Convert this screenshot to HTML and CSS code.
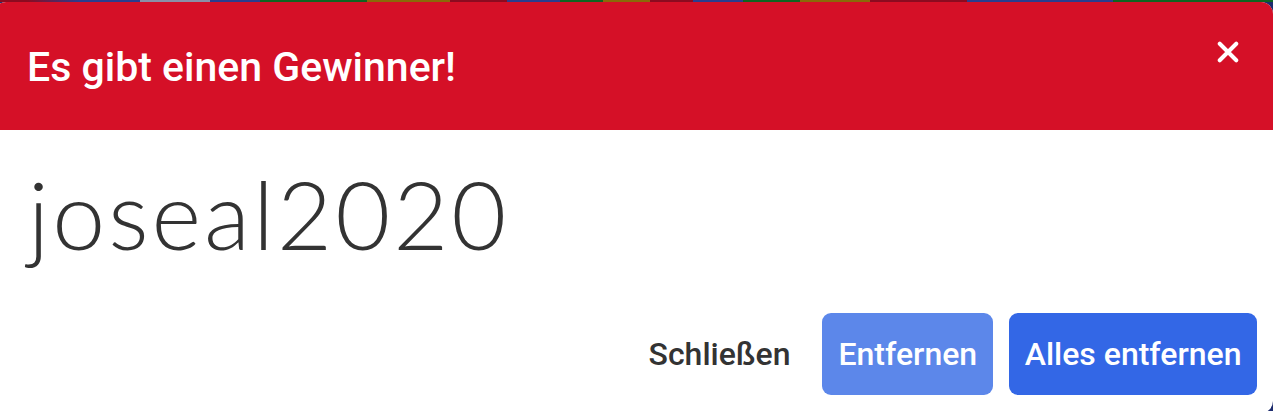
FILE: index.html
```html
<!DOCTYPE html>
<html lang="de">
<head>
  <meta charset="UTF-8" />
  <meta name="viewport" content="width=device-width, initial-scale=1.0" />
  <title>Gewinner</title>
  <link rel="stylesheet" href="styles.css">
</head>
<body>
  <!-- Backdrop strip (wheel behind the modal) -->
  <div class="backdrop-strip"></div>

  <!-- Winner modal -->
  <div class="modal">
    <header class="modal-head">
      <h1>Es gibt einen Gewinner!</h1>
      <button class="close" aria-label="Schließen">
        <svg viewBox="0 0 24 24" width="22" height="22"><path d="M3 3L21 21M21 3L3 21" stroke="#fff" stroke-width="4.4" stroke-linecap="round"/></svg>
      </button>
    </header>

    <section class="modal-body">
      <p class="winner">joseal2020</p>
    </section>

    <footer class="modal-foot">
      <button class="btn btn-text">Schließen</button>
      <button class="btn btn-light">Entfernen</button>
      <button class="btn btn-primary">Alles entfernen</button>
    </footer>
  </div>
</body>
</html>
```

FILE: styles.css
```css
:root{
  --red:#d51027;
  --blue:#3367e6;
  --blue-light:#5c87ea;
  --ink:#333;
}
*{box-sizing:border-box;margin:0;padding:0}
html,body{height:100%;overflow:hidden}
body{
  font-family:Roboto,'Liberation Sans',sans-serif;
  background:#1d2c6e;
}

/* ── Strip of the wheel peeking above the modal ───────── */
.backdrop-strip{
  height:2px;
  background:linear-gradient(90deg,
    #8c0b20 0 27px,#2a3d8f 80px 140px,#8a90a8 140px 210px,#2a3d8f 210px 260px,
    #0f6420 260px 367px,#8a6a08 367px 450px,#8c0b20 450px 507px,#2a3d8f 507px 560px,
    #0f6420 560px 603px,#8a6a08 603px 650px,#8c0b20 650px 693px,#2a3d8f 693px 743px,
    #0f6420 743px 800px,#8a6a08 800px 870px,#8c0b20 870px 967px,#2a3d8f 967px 1113px,
    #0f6420 1113px 1273px);
}

/* ── Modal ───────────────────────────────────────────── */
.modal{
  margin-left:-6px;
  width:calc(100% + 6px);
  height:411px;
  background:#fff;
  border-radius:12px;
  overflow:hidden;
  display:flex;
  flex-direction:column;
}
.modal-head{
  background:var(--red);
  height:128px;
  display:flex;
  align-items:flex-start;
  justify-content:space-between;
  padding:0 34px 0 33px;
}
.modal-head h1{
  color:#fff;
  font-size:41px;
  font-weight:500;
  line-height:1;
  margin-top:45px;
}
.close{
  background:none;border:none;cursor:pointer;
  margin-top:39px;
  width:22px;height:22px;
}
.close svg{display:block}

.modal-body{
  flex:1;
  padding:0 31px 0 34px;
}
.winner{
  font-family:Lato,'Open Sans',sans-serif;
  font-weight:300;
  font-size:95px;
  letter-spacing:3px;
  line-height:1;
  color:var(--ink);
  margin-top:36px;
}

.modal-foot{
  display:flex;
  justify-content:flex-end;
  align-items:center;
  gap:16px;
  padding:0 16px 18px;
}
.btn{
  font-family:inherit;
  font-size:32px;
  font-weight:500;
  height:82px;
  padding:0 16px;
  border:none;
  border-radius:9px;
  color:#fff;
  cursor:pointer;
}
.btn-text{background:none;color:var(--ink);padding:0 16px}
.btn-light{background:var(--blue-light)}
.btn-primary{background:var(--blue);padding:0 15.5px}
```
